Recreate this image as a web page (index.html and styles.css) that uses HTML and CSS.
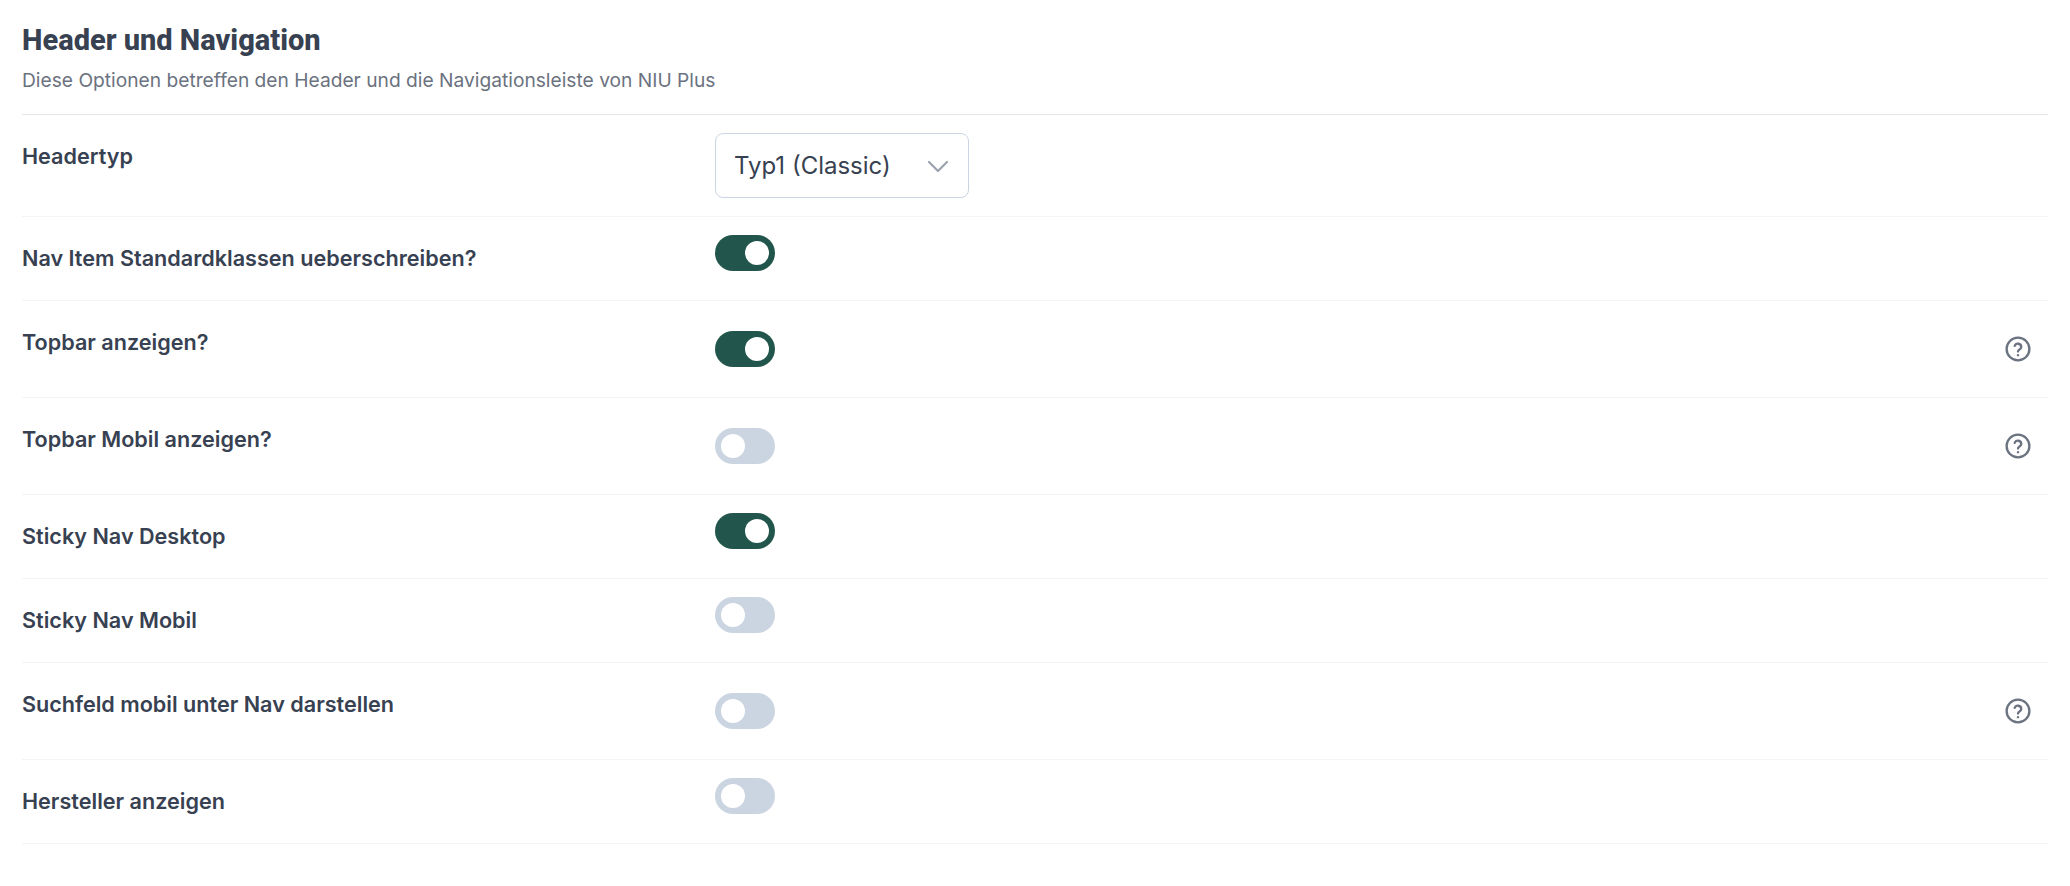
FILE: index.html
```html
<!DOCTYPE html>
<html lang="de">
<head>
<meta charset="utf-8">
<title>Header und Navigation</title>
<link rel="stylesheet" href="styles.css">
</head>
<body>
<section class="panel">
  <header class="head">
    <h2 class="title">Header und Navigation</h2>
    <p class="sub">Diese Optionen betreffen den Header und die Navigationsleiste von NIU Plus</p>
  </header>
  <div class="row row-select">
    <span class="label">Headertyp</span>
    <div class="select"><span>Typ1 (Classic)</span>
      <svg class="chev" viewBox="0 0 24 24" width="24" height="24" fill="none" stroke="#9ca3af" stroke-width="2.2" stroke-linecap="round" stroke-linejoin="round"><path d="M3 8l9 9 9-9"/></svg>
    </div>
  </div>
  <div class="row row-plain">
    <span class="label">Nav Item Standardklassen ueberschreiben?</span>
    <span class="toggle on"></span>
  </div>
  <div class="row row-help">
    <span class="label">Topbar anzeigen?</span>
    <span class="toggle on"></span>
    <svg class="help" viewBox="0 0 24 24" width="28" height="28" fill="none" stroke="#6b7280" stroke-width="2" stroke-linecap="round" stroke-linejoin="round"><circle cx="12" cy="12" r="9.75"/><path d="M9.2 9.3a2.9 2.9 0 0 1 5.6.9c0 1.9-2.8 2.2-2.8 4"/><path d="M12 17.2v.1"/></svg>
  </div>
  <div class="row row-help">
    <span class="label">Topbar Mobil anzeigen?</span>
    <span class="toggle"></span>
    <svg class="help" viewBox="0 0 24 24" width="28" height="28" fill="none" stroke="#6b7280" stroke-width="2" stroke-linecap="round" stroke-linejoin="round"><circle cx="12" cy="12" r="9.75"/><path d="M9.2 9.3a2.9 2.9 0 0 1 5.6.9c0 1.9-2.8 2.2-2.8 4"/><path d="M12 17.2v.1"/></svg>
  </div>
  <div class="row row-plain">
    <span class="label">Sticky Nav Desktop</span>
    <span class="toggle on"></span>
  </div>
  <div class="row row-plain">
    <span class="label">Sticky Nav Mobil</span>
    <span class="toggle"></span>
  </div>
  <div class="row row-help">
    <span class="label">Suchfeld mobil unter Nav darstellen</span>
    <span class="toggle"></span>
    <svg class="help" viewBox="0 0 24 24" width="28" height="28" fill="none" stroke="#6b7280" stroke-width="2" stroke-linecap="round" stroke-linejoin="round"><circle cx="12" cy="12" r="9.75"/><path d="M9.2 9.3a2.9 2.9 0 0 1 5.6.9c0 1.9-2.8 2.2-2.8 4"/><path d="M12 17.2v.1"/></svg>
  </div>
  <div class="row row-plain">
    <span class="label">Hersteller anzeigen</span>
    <span class="toggle"></span>
  </div>
</section>
</body>
</html>
```
FILE: styles.css
```css
* { box-sizing: border-box; }
html, body { margin: 0; background: #fff; }
body { font-family: "Inter", "Liberation Sans", sans-serif; color: #374151; overflow: hidden; height: 886px; }
.panel { margin: 0 22px; }
.head { height: 115px; padding-top: 22px; border-bottom: 1px solid #e5e7eb; }
.title { margin: 0; font-family: "Roboto", sans-serif; font-weight: 800; font-size: 29px; line-height: 36px; color: #374151; }
.sub { margin: 9px 0 0; font-size: 19.2px; line-height: 26px; color: #6b7280; }
.row { display: grid; grid-template-columns: 693px 1fr 44px; border-bottom: 1px solid #f3f4f6; }
.label { font-size: 21.6px; line-height: 28px; font-weight: 600; color: #374151; }
.row-select { height: 102px; padding-top: 18px; }
.row-select .label { padding-top: 9px; }
.row-plain { height: 84px; padding-top: 18px; }
.row-plain .label { padding-top: 9px; }
.row-help { height: 97px; align-items: center; }
.row-help .label { align-self: start; padding-top: 27px; }
.select { display: flex; align-items: center; justify-content: space-between; width: 254px; height: 65px; padding: 0 18px; border: 1px solid #cbd5e1; border-radius: 8px; font-size: 24px; color: #374151; }
.chev { display: block; }
.toggle { position: relative; display: block; width: 60px; height: 36px; border-radius: 18px; background: #cbd5e1; }
.toggle::after { content: ""; position: absolute; top: 6px; left: 6px; width: 24px; height: 24px; border-radius: 50%; background: #fff; }
.toggle.on { background: #22564c; }
.toggle.on::after { left: 30px; }
.help { display: block; }
```
